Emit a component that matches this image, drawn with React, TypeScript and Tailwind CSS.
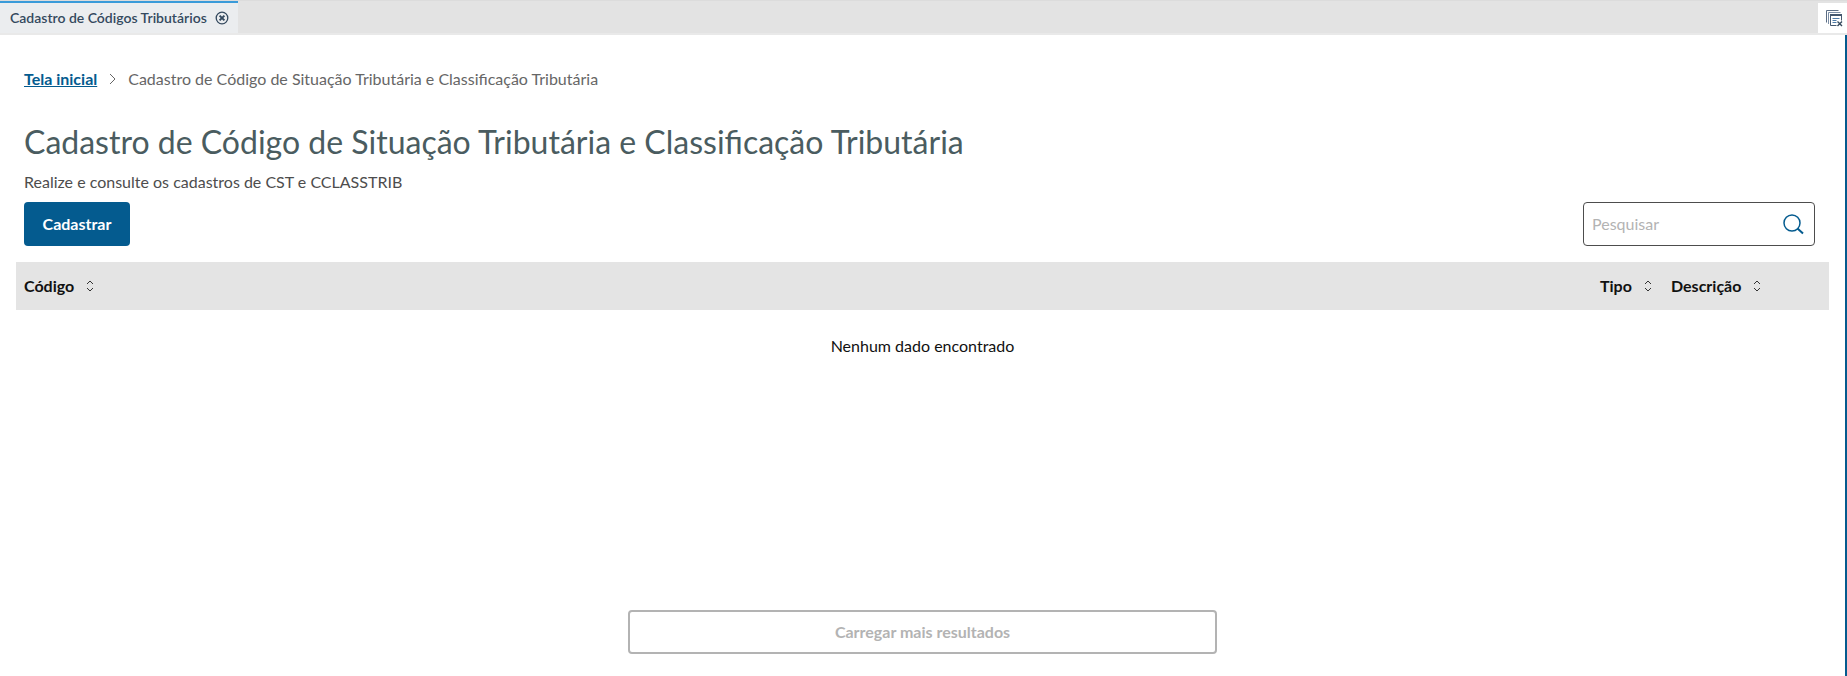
import { useState } from "react";

const columns = [
  { label: "Código", className: "pl-2" },
  { label: "Tipo", className: "w-[71px]" },
  { label: "Descrição", className: "w-[158px]" },
];

const SortIcon = () => (
  <svg width="8" height="12" viewBox="0 0 8 12" fill="none" stroke="#333" strokeWidth="1" aria-hidden="true">
    <path d="M1 4 4 1l3 3M1 8l3 3 3-3" />
  </svg>
);

const TabBar = () => (
  <header className="flex h-[35px] items-stretch justify-between border-t border-b-2 border-t-[#dcdcdc] border-b-[#e9e9e9] bg-[#e3e3e3]">
    <div className="flex w-[238px] items-center gap-2 border-t-2 border-[#3a9bd9] bg-[#ebedef] pl-[10px]">
      <span className="text-sm leading-4 font-semibold text-[#34495e]">Cadastro de Códigos Tributários</span>
      <button type="button" aria-label="Fechar aba">
        <svg width="14" height="14" viewBox="0 0 14 14" fill="none" stroke="#34495e" aria-hidden="true">
          <circle cx="7" cy="7" r="5.8" strokeWidth="1.3" />
          <path d="m4.6 4.6 4.8 4.8m0-4.8L4.6 9.4" strokeWidth="2" />
        </svg>
      </button>
    </div>
    <button
      type="button"
      aria-label="Fechar todas as abas"
      className="mt-[2px] flex w-[29px] items-center justify-center bg-white pl-1"
    >
      <svg width="17" height="17" viewBox="0 0 17 17" fill="none" aria-hidden="true">
        <path d="M.5 12.5V.5h12" stroke="#5b6d84" />
        <path d="M2.5 14V2.5h12" stroke="#7d8fa6" />
        <path d="M4.5 15.5h6M4.5 15.5V4.5h11v6" stroke="#44586f" />
        <path d="M4 5h12" stroke="#44586f" strokeWidth="2" />
        <path d="M6.5 8.5h7M6.5 10.5h4M6.5 12.5h4" stroke="#4f7ca8" />
        <path d="m11.5 11.5 4.5 4.5m0-4.5L11.5 16" stroke="#34495e" strokeWidth="1.4" />
      </svg>
    </button>
  </header>
);

const App = () => {
  const [search, setSearch] = useState("");

  return (
    <div className="flex min-h-screen flex-col bg-white font-[Lato,sans-serif] text-base">
      <TabBar />

      <main className="flex-1 border-r-2 border-[#045b8f] px-4 pt-8">
        <div className="px-2">
          <nav aria-label="Navegação" className="flex h-6 items-center text-[#666]">
            <a href="#" className="font-bold text-[#045b8f] underline">
              Tela inicial
            </a>
            <svg width="7" height="12" viewBox="0 0 7 12" fill="none" stroke="#666" className="mx-3" aria-hidden="true">
              <path d="m1 1 5 5-5 5" />
            </svg>
            <span>Cadastro de Código de Situação Tributária e Classificação Tributária</span>
          </nav>

          <h1 className="mt-[27px] text-[32px] leading-12 font-normal text-[#4a5c60]">
            Cadastro de Código de Situação Tributária e Classificação Tributária
          </h1>
          <p className="mt-1 leading-6 text-[#4d4d4d]">Realize e consulte os cadastros de CST e CCLASSTRIB</p>
        </div>

        <div className="mt-2 flex justify-between pr-[14px] pl-2">
          <button type="button" className="h-11 w-[106px] rounded bg-[#045b8f] font-bold text-white">
            Cadastrar
          </button>
          <label className="flex h-11 w-[232px] items-center rounded border border-[#4d4d4d] pr-[10px] pl-2">
            <input
              type="text"
              aria-label="Pesquisar"
              placeholder="Pesquisar"
              value={search}
              onChange={(e) => setSearch(e.target.value)}
              className="w-full min-w-0 flex-1 text-[#4d4d4d] outline-none placeholder:text-[#b3b3b3]"
            />
            <svg width="21" height="21" viewBox="0 0 21 21" fill="none" stroke="#045b8f" strokeWidth="1.5" aria-hidden="true">
              <circle cx="9" cy="9" r="8" />
              <path d="m14.5 14.5 5.5 5" strokeWidth="2" />
            </svg>
          </label>
        </div>

        <table className="mt-4 w-full table-fixed">
          <thead>
            <tr className="h-12 bg-[#e4e4e4] text-left text-[#111]">
              {columns.map(({ label, className }) => (
                <th key={label} className={className}>
                  <button type="button" className="flex items-center gap-3">
                    {label}
                    <SortIcon />
                  </button>
                </th>
              ))}
            </tr>
          </thead>
          <tbody>
            <tr>
              <td colSpan={3} className="pt-6 text-center leading-6 text-[#111]">
                Nenhum dado encontrado
              </td>
            </tr>
          </tbody>
        </table>

        <div className="mt-[252px] flex justify-center px-6 pb-5">
          <button type="button" disabled className="h-11 w-1/3 rounded border-2 border-[#b3b3b3] font-bold text-[#b3b3b3]">
            Carregar mais resultados
          </button>
        </div>
      </main>
    </div>
  );
};

export default App;
